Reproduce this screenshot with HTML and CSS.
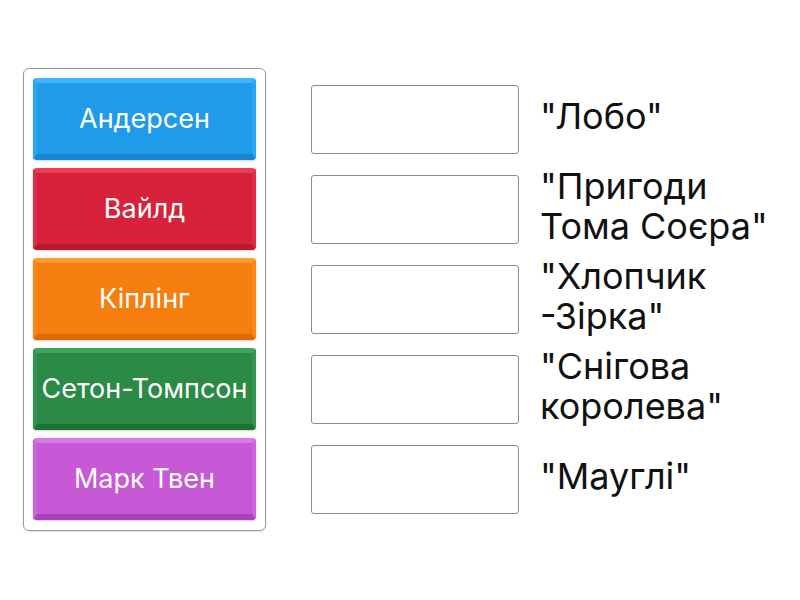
FILE: index.html
```html
<!DOCTYPE html>
<html lang="uk">
<head>
<meta charset="utf-8">
<link rel="stylesheet" href="styles.css">
</head>
<body>
<div class="page">
  <div class="bank">
    <div class="tile blue">Андерсен</div>
    <div class="tile red">Вайлд</div>
    <div class="tile orange">Кіплінг</div>
    <div class="tile green">Сетон-Томпсон</div>
    <div class="tile purple">Марк Твен</div>
  </div>
  <div class="rows">
    <div class="row"><div class="slot"></div><div class="label">"Лобо"</div></div>
    <div class="row"><div class="slot"></div><div class="label">"Пригоди<br>Тома Соєра"</div></div>
    <div class="row"><div class="slot"></div><div class="label">"Хлопчик<br>-Зірка"</div></div>
    <div class="row"><div class="slot"></div><div class="label">"Снігова<br>королева"</div></div>
    <div class="row"><div class="slot"></div><div class="label">"Мауглі"</div></div>
  </div>
</div>
</body>
</html>
```
FILE: styles.css
```css
html, body {
  margin: 0;
  padding: 0;
  background: #fff;
  font-family: Inter, Roboto, "Liberation Sans", sans-serif;
}
.page {
  width: 800px;
  height: 600px;
  box-sizing: border-box;
  padding: 68px 0 0 23px;
  display: flex;
  align-items: flex-start;
}
.bank {
  width: 243px;
  box-sizing: border-box;
  border: 1px solid #9a9a9a;
  border-radius: 6px;
  padding: 9px 9px 10px 9px;
  display: flex;
  flex-direction: column;
  gap: 8px;
  box-shadow: 0 1px 2px rgba(0,0,0,0.12);
}
.tile {
  height: 82px;
  box-sizing: border-box;
  border-radius: 4px;
  border-style: solid;
  border-width: 5px 4px 6px 4px;
  display: flex;
  align-items: center;
  justify-content: center;
  color: #fff;
  font-size: 27px;
  white-space: nowrap;
  box-shadow: 0 1px 2px rgba(0,0,0,0.2);
}
.blue { background: #1f9bea; border-color: #3fb4fd #2aa5f3 #1a84d2 #2aa5f3; }
.red { background: #d8213b; border-color: #ee3d52 #e02c44 #b91a2f #e02c44; }
.orange { background: #f57e0e; border-color: #ff9a2c #fa8818 #dd6900 #fa8818; }
.green { background: #2a8a46; border-color: #3da45c #31944f #1d7036 #31944f; }
.purple { background: #c759d7; border-color: #dc77ec #cf63df #a844b8 #cf63df; }
.rows {
  margin: 10px 0 0 45px;
  display: flex;
  flex-direction: column;
  gap: 8px;
}
.row {
  height: 82px;
  display: flex;
  align-items: center;
}
.slot {
  width: 208px;
  height: 69px;
  box-sizing: border-box;
  border: 1.5px solid #8c8c8c;
  border-radius: 3px;
  background: #fff;
  flex: none;
}
.label {
  margin-left: 21px;
  padding-bottom: 6px;
  font-size: 36px;
  line-height: 40px;
  color: #111;
  white-space: nowrap;
}
```
